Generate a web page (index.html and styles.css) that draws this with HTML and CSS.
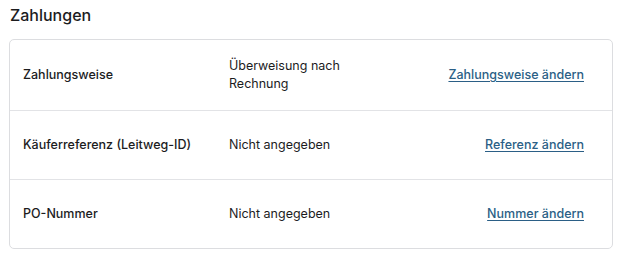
FILE: index.html
```html
<!DOCTYPE html>
<html lang="de">
<head>
<meta charset="utf-8">
<link rel="stylesheet" href="styles.css">
</head>
<body>
<section class="payments">
  <h2 class="title">Zahlungen</h2>
  <div class="card">
    <div class="row">
      <div class="label">Zahlungsweise</div>
      <div class="value">Überweisung nach Rechnung</div>
      <div class="action"><a href="#">Zahlungsweise ändern</a></div>
    </div>
    <div class="row">
      <div class="label">Käuferreferenz (Leitweg-ID)</div>
      <div class="value">Nicht angegeben</div>
      <div class="action"><a href="#">Referenz ändern</a></div>
    </div>
    <div class="row">
      <div class="label">PO-Nummer</div>
      <div class="value">Nicht angegeben</div>
      <div class="action"><a href="#">Nummer ändern</a></div>
    </div>
  </div>
</section>
</body>
</html>
```
FILE: styles.css
```css
* { box-sizing: border-box; }
body {
  margin: 0;
  background: #fff;
  font-family: Inter, "Noto Sans", sans-serif;
  color: #1c1c1e;
}
.payments {
  padding: 4px 8px 0 9px;
}
.title {
  margin: 0 0 13px 1px;
  font-size: 16px;
  font-weight: 500;
  line-height: 22px;
  color: #1c1c1e;
}
.card {
  width: 604px;
  border: 1px solid #dcdde0;
  border-radius: 5px;
}
.row {
  display: grid;
  grid-template-columns: 206px 132px 1fr;
  align-items: center;
  height: 69px;
  padding: 0 28px 0 13px;
  border-top: 1px solid #e2e3e6;
  font-size: 12.5px;
  line-height: 18px;
}
.row:first-child { border-top: none; height: 70px; }
.label { font-weight: 500; }
.value { font-weight: 400; }
.action { text-align: right; }
.action a {
  color: #2b5f86;
  font-weight: 500;
  text-decoration: underline;
  text-underline-offset: 2px;
}
```
